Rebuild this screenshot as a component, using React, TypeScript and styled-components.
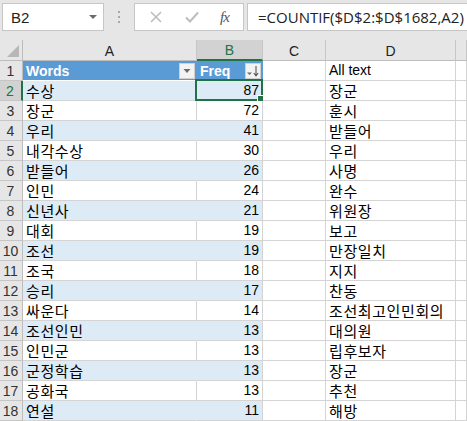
import styled, { createGlobalStyle, css } from "styled-components";

const GlobalStyle = createGlobalStyle`
  html, body {
    margin: 0;
    padding: 0;
    background: #ffffff;
  }
  * {
    box-sizing: border-box;
  }
`;

const FONT = `"Liberation Sans", "Noto Sans CJK KR", sans-serif`;
const KFONT = `"Noto Sans CJK KR", "Liberation Sans", sans-serif`;
const GREEN = "#217346";
const GRID = "#d4d4d4";
const BAND = "#ddebf7";
const HEAD = "#5b9bd5";

const words: [string, number][] = [
  ["수상", 87],
  ["장군", 72],
  ["우리", 41],
  ["내각수상", 30],
  ["받들어", 26],
  ["인민", 24],
  ["신년사", 21],
  ["대회", 19],
  ["조선", 19],
  ["조국", 18],
  ["승리", 17],
  ["싸운다", 14],
  ["조선인민", 13],
  ["인민군", 13],
  ["군정학습", 13],
  ["공화국", 13],
  ["연설", 11],
];

const allText = [
  "장군",
  "훈시",
  "받들어",
  "우리",
  "사명",
  "완수",
  "위원장",
  "보고",
  "만장일치",
  "지지",
  "찬동",
  "조선최고인민회의",
  "대의원",
  "립후보자",
  "장군",
  "추천",
  "해방",
];

const Page = styled.div`
  width: 467px;
  height: 421px;
  overflow: hidden;
  background: #e6e6e6;
  font-family: ${FONT};
`;

const Toolbar = styled.div`
  height: 40px;
  display: flex;
  align-items: flex-start;
  padding: 3px 0 0 2px;
  background: #e6e6e6;
`;

const NameBox = styled.div`
  width: 102px;
  height: 28px;
  background: #fff;
  border: 1px solid #c6c6c6;
  display: flex;
  align-items: center;
  justify-content: space-between;
  padding: 0 6px 0 8px;
  font-size: 15px;
  color: #222;
`;

const Caret = styled.span`
  width: 0;
  height: 0;
  border-left: 4px solid transparent;
  border-right: 4px solid transparent;
  border-top: 4px solid #6b6b6b;
`;

const Grip = styled.div`
  width: 30px;
  height: 28px;
  display: flex;
  flex-direction: column;
  align-items: center;
  justify-content: center;
  gap: 3px;
  span {
    width: 2px;
    height: 2px;
    background: #a8a8a8;
  }
`;

const FuncBox = styled.div`
  width: 110px;
  height: 28px;
  background: #fff;
  border: 1px solid #c6c6c6;
  display: flex;
  align-items: center;
  justify-content: space-around;
  padding: 0 4px;
  margin-right: 3px;
`;

const Fx = styled.span`
  font-family: "Liberation Serif", serif;
  font-style: italic;
  font-size: 15px;
  color: #555;
  letter-spacing: -1px;
`;

const FormulaBox = styled.div`
  flex: 1;
  height: 28px;
  background: #fff;
  border: 1px solid #c6c6c6;
  border-right: none;
  display: flex;
  align-items: center;
  padding-left: 10px;
  font-family: "Open Sans", sans-serif;
  font-size: 15px;
  color: #222;
  white-space: nowrap;
`;

const Sheet = styled.div`
  display: grid;
  grid-template-columns: 23px 174px 66px 63px 130px 11px;
  grid-template-rows: 21px repeat(18, 20px);
  background: #fff;
`;

const ColHead = styled.div<{ $active?: boolean }>`
  background: ${(p) => (p.$active ? "#d2d2d2" : "#e6e6e6")};
  border-right: 1px solid #c6c6c6;
  border-bottom: ${(p) => (p.$active ? `2px solid ${GREEN}` : "1px solid #bdbdbd")};
  color: ${(p) => (p.$active ? GREEN : "#222")};
  font-size: 14px;
  display: flex;
  align-items: center;
  justify-content: center;
  padding-top: 1px;
`;

const Corner = styled.div`
  background: #e6e6e6;
  border-right: 1px solid #bdbdbd;
  border-bottom: 1px solid #bdbdbd;
  position: relative;
  &::after {
    content: "";
    position: absolute;
    right: 3px;
    bottom: 3px;
    width: 0;
    height: 0;
    border-left: 12px solid transparent;
    border-bottom: 12px solid #b7b7b7;
  }
`;

const RowHead = styled.div<{ $active?: boolean }>`
  background: ${(p) => (p.$active ? "#d2d2d2" : "#e6e6e6")};
  border-right: ${(p) => (p.$active ? `2px solid ${GREEN}` : "1px solid #bdbdbd")};
  border-bottom: 1px solid #c6c6c6;
  color: ${(p) => (p.$active ? GREEN : "#333")};
  font-size: 14px;
  display: flex;
  align-items: center;
  justify-content: center;
  padding-right: 1px;
`;

const Cell = styled.div<{ $band?: boolean; $num?: boolean; $korean?: boolean }>`
  position: relative;
  background: ${(p) => (p.$band ? BAND : "#fff")};
  border-right: 1px solid ${GRID};
  border-bottom: 1px solid ${GRID};
  display: flex;
  align-items: flex-end;
  justify-content: ${(p) => (p.$num ? "flex-end" : "flex-start")};
  padding: 0 3px 1px 3px;
  font-size: 14px;
  line-height: 18px;
  color: #000;
  white-space: nowrap;
  overflow: visible;
  ${(p) =>
    p.$korean &&
    css`
      font-family: ${KFONT};
      font-size: 15px;
      line-height: 19px;
      letter-spacing: 0.6px;
      padding-bottom: 0;
    `}
`;

const BandA = styled(Cell)`
  border-right-color: ${(p) => (p.$band ? BAND : GRID)};
`;

const HeaderCell = styled.div`
  background: ${HEAD};
  color: #fff;
  font-weight: bold;
  font-size: 14px;
  display: flex;
  align-items: center;
  justify-content: space-between;
  padding: 1px 2px 0 3px;
  border-bottom: 1px solid #fff;
`;

const FilterBtn = styled.div`
  width: 16px;
  height: 16px;
  background: #f3f3f3;
  border: 1px solid #d0d0d0;
  display: flex;
  align-items: center;
  justify-content: center;
`;

const Selection = styled.div`
  position: absolute;
  left: -2px;
  top: -2px;
  right: -1px;
  bottom: -1px;
  border: 2px solid ${GREEN};
  pointer-events: none;
  &::after {
    content: "";
    position: absolute;
    right: -4px;
    bottom: -4px;
    width: 6px;
    height: 6px;
    background: ${GREEN};
    border: 1px solid #fff;
  }
`;

const CrossIcon = () => (
  <svg width="14" height="14" viewBox="0 0 14 14">
    <path d="M2 2 L12 12 M12 2 L2 12" stroke="#bdbdbd" strokeWidth="1.6" fill="none" />
  </svg>
);

const CheckIcon = () => (
  <svg width="16" height="14" viewBox="0 0 16 14">
    <path d="M2 7.5 L6 11.5 L14 2.5" stroke="#bdbdbd" strokeWidth="2" fill="none" />
  </svg>
);

const DropIcon = () => (
  <svg width="10" height="6" viewBox="0 0 10 6">
    <path d="M1.5 1 L8.5 1 L5 5 Z" fill="#6b6b6b" />
  </svg>
);

const SortIcon = () => (
  <svg width="14" height="12" viewBox="0 0 14 12">
    <path d="M1 7.5 L6 7.5 L3.5 10 Z" fill="#6b6b6b" />
    <path d="M10 1 L10 10.5 M7.8 8 L10 10.8 L12.2 8" stroke="#555" strokeWidth="1.1" fill="none" />
  </svg>
);

export default function App() {
  return (
    <Page>
      <GlobalStyle />
      <Toolbar>
        <NameBox>
          B2
          <Caret />
        </NameBox>
        <Grip>
          <span />
          <span />
          <span />
        </Grip>
        <FuncBox>
          <CrossIcon />
          <CheckIcon />
          <Fx>fx</Fx>
        </FuncBox>
        <FormulaBox>=COUNTIF($D$2:$D$1682,A2)</FormulaBox>
      </Toolbar>
      <Sheet>
        <Corner />
        <ColHead>A</ColHead>
        <ColHead $active>B</ColHead>
        <ColHead>C</ColHead>
        <ColHead>D</ColHead>
        <ColHead />

        <RowHead>1</RowHead>
        <HeaderCell>
          Words
          <FilterBtn>
            <DropIcon />
          </FilterBtn>
        </HeaderCell>
        <HeaderCell>
          Freq
          <FilterBtn>
            <SortIcon />
          </FilterBtn>
        </HeaderCell>
        <Cell />
        <Cell>All text</Cell>
        <Cell />

        {words.map(([w, n], i) => {
          const row = i + 2;
          const band = row % 2 === 0;
          return [
            <RowHead key={`h${row}`} $active={row === 2}>
              {row}
            </RowHead>,
            <BandA key={`a${row}`} $band={band} $korean>
              {w}
            </BandA>,
            <Cell key={`b${row}`} $band={band} $num>
              {n}
              {row === 2 && <Selection />}
            </Cell>,
            <Cell key={`c${row}`} />,
            <Cell key={`d${row}`} $korean>
              {allText[i]}
            </Cell>,
            <Cell key={`e${row}`} />,
          ];
        })}
      </Sheet>
    </Page>
  );
}
